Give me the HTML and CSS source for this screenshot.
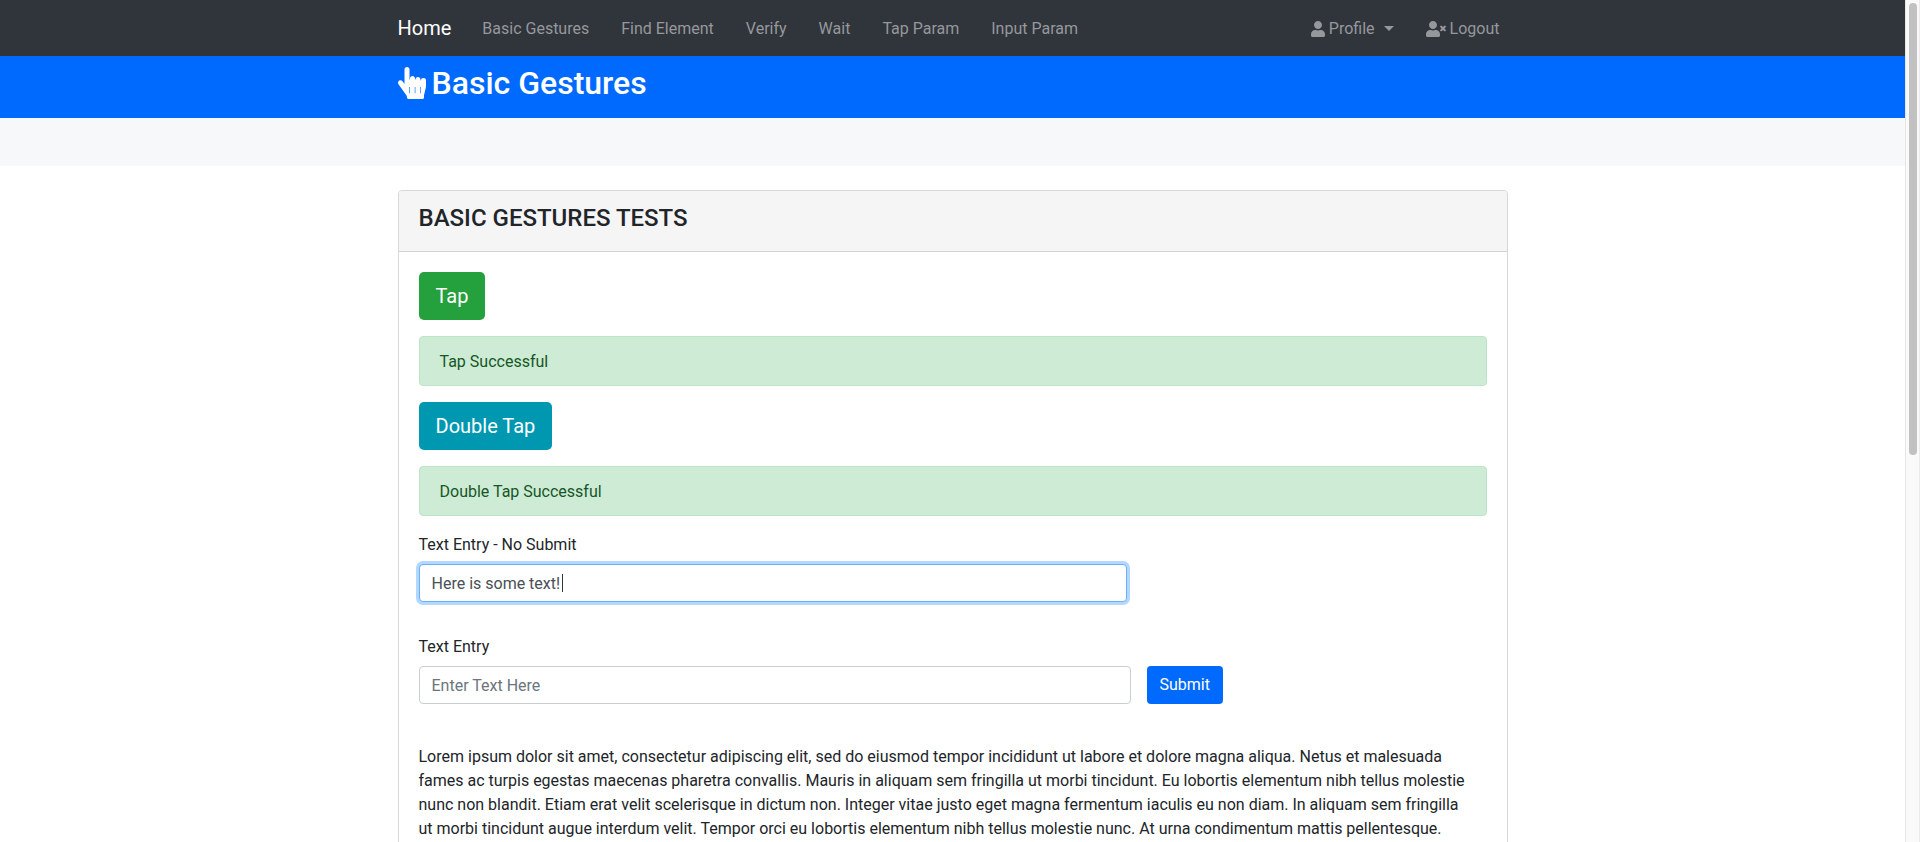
FILE: index.html
```html
<!DOCTYPE html>
<html lang="en">
<head>
<meta charset="utf-8">
<meta name="viewport" content="width=device-width, initial-scale=1">
<title>Basic Gestures</title>
<link rel="stylesheet" href="styles.css">
</head>
<body>
<div class="viewport">
  <div class="page">
    <nav class="navbar">
      <div class="container navbar-inner">
        <a class="brand" href="#">Home</a>
        <div class="nav-links">
          <a href="#">Basic Gestures</a>
          <a href="#">Find Element</a>
          <a href="#">Verify</a>
          <a href="#">Wait</a>
          <a href="#">Tap Param</a>
          <a href="#">Input Param</a>
        </div>
        <div class="nav-links nav-user">
          <a href="#"><svg class="icon-user" viewBox="0 0 448 512" aria-hidden="true"><path d="M224 256c70.700 0 128-57.300 128-128S294.700 0 224 0 96 57.300 96 128s57.300 128 128 128zm89.600 32h-16.700c-22.200 10.200-46.900 16-72.900 16s-50.600-5.800-72.900-16h-16.700C60.200 288 0 348.200 0 422.400V464c0 26.500 21.500 48 48 48h352c26.500 0 48-21.500 48-48v-41.600c0-74.200-60.200-134.400-134.400-134.400z"/></svg>Profile<span class="chevron"></span></a>
          <a href="#"><svg class="icon-logout" viewBox="0 0 640 512" aria-hidden="true"><path d="M589.600 240l45.600-45.600c6.300-6.300 6.300-16.500 0-22.800l-22.800-22.800c-6.300-6.300-16.500-6.300-22.800 0L544 194.400l-45.600-45.600c-6.300-6.300-16.500-6.300-22.800 0l-22.800 22.800c-6.300 6.300-6.300 16.500 0 22.800l45.600 45.600-45.600 45.600c-6.300 6.300-6.300 16.500 0 22.800l22.800 22.800c6.300 6.300 16.500 6.300 22.800 0l45.600-45.600 45.600 45.600c6.300 6.300 16.500 6.300 22.800 0l22.800-22.800c6.300-6.300 6.300-16.500 0-22.800L589.600 240zM224 256c70.700 0 128-57.300 128-128S294.700 0 224 0 96 57.300 96 128s57.300 128 128 128zm89.600 32h-16.700c-22.200 10.200-46.900 16-72.900 16s-50.600-5.800-72.900-16h-16.700C60.200 288 0 348.200 0 422.400V464c0 26.500 21.500 48 48 48h352c26.500 0 48-21.500 48-48v-41.600c0-74.200-60.200-134.400-134.400-134.400z"/></svg>Logout</a>
        </div>
      </div>
    </nav>
    <header class="banner">
      <div class="container">
        <h1><svg class="icon-hand" viewBox="0 0 448 512" aria-hidden="true"><path d="M448 240v66.200a80 80 0 0 1-1.800 17L418 443a24 24 0 0 0-2 10v35c0 13.300-10.700 24-24 24H168c-13.300 0-24-10.700-24-24v-9.300c0-14-6.800-24-16-33.400L7.600 275.500c-13-17.900-9-42.900 8.800-55.900 17.900-13 42.900-9 55.900 8.800L104 272V40c0-22.100 17.900-40 40-40s40 17.900 40 40v160h8v-18c0-22.100 17.900-40 40-40s40 17.900 40 40v18h8v-2c0-22.100 17.900-40 40-40s40 17.900 40 40v14h8c0-22.100 17.900-36 40-36s40 13.900 40 36v28z"/><path class="gap" d="M180 320h10v100h-10zM268 320h10v100h-10zM356 320h10v100h-10z"/></svg>Basic Gestures</h1>
      </div>
    </header>
    <div class="subheader"></div>
    <main class="container content">
      <section class="card">
        <div class="card-header"><h2>BASIC GESTURES TESTS</h2></div>
        <div class="card-body">
          <button class="btn btn-large btn-success" type="button">Tap</button>
          <div class="alert" role="status">Tap Successful</div>
          <button class="btn btn-large btn-info" type="button">Double Tap</button>
          <div class="alert" role="status">Double Tap Successful</div>
          <div class="field field-single">
            <label for="entry-plain">Text Entry - No Submit</label>
            <div class="control">
              <input class="is-focused" id="entry-plain" type="text" value="Here is some text!">
              <span class="caret"></span>
            </div>
          </div>
          <form class="field">
            <label for="entry-submit">Text Entry</label>
            <div class="entry-row">
              <input id="entry-submit" type="text" placeholder="Enter Text Here">
              <button class="btn btn-primary" type="button">Submit</button>
            </div>
          </form>
          <p class="copy">Lorem ipsum dolor sit amet, consectetur adipiscing elit, sed do eiusmod tempor incididunt ut labore et dolore magna aliqua. Netus et malesuada fames ac turpis egestas maecenas pharetra convallis. Mauris in aliquam sem fringilla ut morbi tincidunt. Eu lobortis elementum nibh tellus molestie nunc non blandit. Etiam erat velit scelerisque in dictum non. Integer vitae justo eget magna fermentum iaculis eu non diam. In aliquam sem fringilla ut morbi tincidunt augue interdum velit. Tempor orci eu lobortis elementum nibh tellus molestie nunc. At urna condimentum mattis pellentesque.</p>
        </div>
      </section>
    </main>
  </div>
  <div class="scrollbar" aria-hidden="true"><div class="thumb"></div></div>
</div>
</body>
</html>
```
FILE: styles.css
```css
* { box-sizing: border-box; }
body {
  margin: 0;
  background: #fff;
  color: #212529;
  font: 16px/24px Roboto, "Liberation Sans", sans-serif;
}
h1, h2, p { margin: 0; }
a { color: inherit; text-decoration: none; }
svg { fill: currentColor; }

.viewport {
  display: grid;
  grid-template-columns: 1fr 15px;
  height: 100vh;
  overflow: hidden;
}
.page { min-width: 0; overflow: hidden; }
.container {
  max-width: 1140px;
  margin: 0 auto;
  padding: 0 15px;
}

.navbar { background: #30343b; color: #96989b; }
.navbar-inner { display: flex; align-items: center; height: 56px; }
.brand { color: #fff; font-size: 20px; margin-right: 15px; }
.nav-links { display: flex; }
.nav-links a { display: flex; align-items: center; padding: 9px 16px 7px; white-space: nowrap; }
.nav-user { margin-left: auto; margin-right: -8px; }
.icon-user { width: 14px; height: 16px; margin-right: 4px; }
.icon-logout { width: 20px; height: 16px; margin-right: 4px; }
.chevron {
  margin: 0 0 2px 9px;
  border: 5px solid transparent;
  border-top-color: currentColor;
  border-bottom: 0;
}

.banner { background: #006aff; color: #fff; height: 62px; padding-top: 8px; }
.banner h1 { display: flex; align-items: center; font-size: 32px; font-weight: 500; line-height: 38px; }
.icon-hand { width: 28px; height: 32px; margin-right: 6px; }
.icon-hand .gap { fill: #006aff; }
.subheader { background: #f7f8fa; height: 48px; }

.content { padding-top: 24px; }
.card { border: 1px solid #d8d8d8; border-radius: 4px; min-height: 100vh; }
.card-header {
  padding: 13px 20px 19px;
  background: #f5f5f5;
  border-bottom: 1px solid #d3d3d3;
  border-radius: 3px 3px 0 0;
}
.card-header h2 { font-size: 24px; font-weight: 500; line-height: 28px; }
.card-body { padding: 20px; }

.btn {
  display: block;
  padding: 6px 12px;
  border: 1px solid transparent;
  border-radius: 4px;
  color: #fff;
  font: inherit;
}
.btn-large { padding: 8px 16px; font-size: 20px; line-height: 30px; border-radius: 5px; }
.btn-success { background: #24a03d; }
.btn-info { background: #0098b1; }
.btn-primary { background: #006aff; }

.alert {
  margin: 16px 0;
  padding: 13px 20px 11px;
  border: 1px solid #bce5c7;
  border-radius: 4px;
  background: #ceebd6;
  color: #155724;
}

.field { margin-bottom: 32px; }
.field label { display: block; padding-top: 1px; margin-bottom: 7px; }
.field input {
  display: block;
  width: 100%;
  height: 38px;
  padding: 6px 12px;
  border: 1px solid #c8ced4;
  border-radius: 4px;
  background: #fff;
  color: #495057;
  font: inherit;
}
.field input::placeholder { color: #6c757d; opacity: 1; }
.field input.is-focused { border-color: #66b0ff; box-shadow: 0 0 0 3px #b3d7ff; }
.field-single { width: 708px; max-width: 100%; }
.control { position: relative; }
.caret { position: absolute; top: 10px; left: 143px; width: 1px; height: 18px; background: #30343b; }
.entry-row { display: flex; gap: 16px; margin-bottom: 40px; }
.entry-row input { flex: 0 1 712px; }
.copy { padding: 1px 14px 0 0; }

.scrollbar {
  padding: 3px 2px 0 3px;
  background: #fafafa;
  border-left: 1px solid #e6e6e6;
  border-right: 1px solid #ebebeb;
}
.thumb { height: 452px; border-radius: 4px; background: #c1c1c1; }
```
